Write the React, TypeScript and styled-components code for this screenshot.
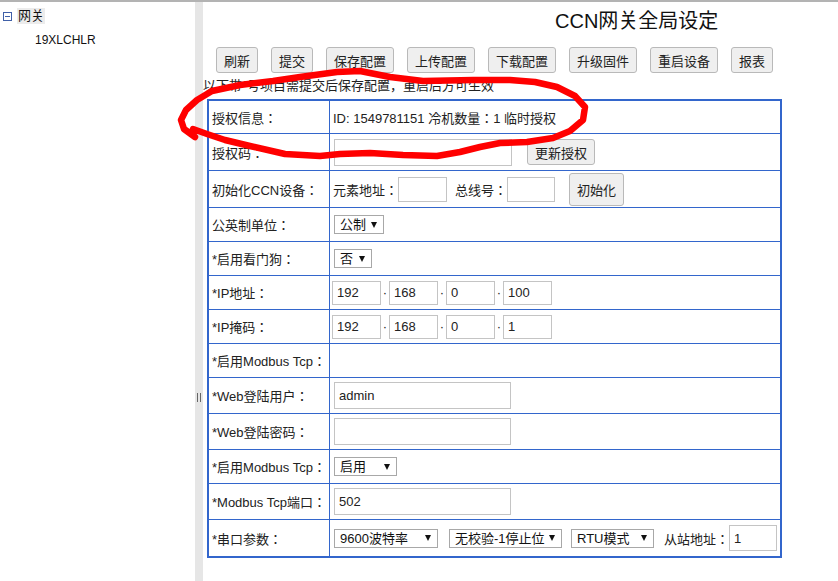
import React from "react";
import styled, { createGlobalStyle } from "styled-components";

const GlobalStyle = createGlobalStyle`
  html, body {
    margin: 0;
    padding: 0;
    background: #fff;
  }

  body {
    font-family: "Liberation Sans", "Noto Sans CJK JP", sans-serif;
    font-size: 13px;
    color: #222;
  }

  * {
    box-sizing: border-box;
  }
`;

const Screen = styled.div`
  position: relative;
  width: 838px;
  height: 581px;
  overflow: hidden;
`;

const Page = styled.div`
  display: flex;
  height: 100%;
  border-top: 2px solid #b3b3b3;
`;

const TreePane = styled.div`
  width: 195px;
  flex: none;
  padding: 6px 0 0 3px;
`;

const TreeRow = styled.div<{ $indent?: number }>`
  display: flex;
  align-items: center;
  gap: 5px;
  height: 16px;
  padding-left: ${(p) => p.$indent ?? 0}px;
  white-space: nowrap;

  & + & {
    margin-top: 8px;
  }
`;

const NodeLabel = styled.span<{ $selected?: boolean }>`
  padding: 0 1px;
  line-height: 16px;
  font-size: ${(p) => (p.$selected ? 13 : 12)}px;
  color: #111;
  background: ${(p) => (p.$selected ? "#ececec" : "transparent")};
`;

const Splitter = styled.div`
  width: 8px;
  flex: none;
  background: #e6e6e6;
  display: flex;
  justify-content: center;
  padding-top: 391px;
`;

const Grip = styled.div`
  width: 4px;
  height: 9px;
  border-left: 1px solid #666;
  border-right: 1px solid #666;
`;

const Main = styled.div`
  flex: 1;
  padding-top: 7px;
`;

const Title = styled.div`
  margin-left: 352px;
  font-size: 20px;
  line-height: 24px;
  color: #111;
  white-space: nowrap;
`;

const Toolbar = styled.div`
  display: flex;
  gap: 13px;
  margin: 14px 0 0 13px;
`;

const Button = styled.button<{ $h?: number; $ml?: number }>`
  height: ${(p) => p.$h ?? 26}px;
  margin-left: ${(p) => p.$ml ?? 0}px;
  padding: 0 7px;
  font: inherit;
  font-size: 13px;
  color: #222;
  background: #efefef;
  border: 1px solid #b9b9b9;
  border-radius: 3px;
  white-space: nowrap;
`;

const Note = styled.div`
  margin-top: 4px;
  line-height: 18px;
  white-space: nowrap;
`;

const SettingsTable = styled.table`
  margin: 4px 0 0 4px;
  width: 575px;
  border: 2px solid #3366cc;
  border-spacing: 0;
  border-collapse: separate;

  tr + tr > td {
    border-top: 1px solid #3366cc;
  }
`;

const Row = styled.tr<{ $h: number }>`
  height: ${(p) => p.$h}px;
`;

const LabelCell = styled.td`
  width: 121px;
  padding: 0 0 0 3px;
  border-right: 1px solid #3366cc;
  white-space: nowrap;
  color: #222;
`;

const ValueCell = styled.td`
  padding: 0 0 0 3px;
  white-space: nowrap;
`;

const Inline = styled.div`
  display: flex;
  align-items: center;
`;

const TextInput = styled.input<{ $w: number; $h?: number; $ml?: number }>`
  width: ${(p) => p.$w}px;
  height: ${(p) => p.$h ?? 27}px;
  margin-left: ${(p) => p.$ml ?? 1}px;
  padding: 0 4px;
  font: inherit;
  font-size: 13px;
  color: #222;
  background: #fff;
  border: 1px solid #c4c4c4;
  outline: none;
`;

const Gap = styled.span<{ $w: number }>`
  display: inline-block;
  width: ${(p) => p.$w}px;
`;

const IpGroup = styled.div`
  display: flex;
  align-items: center;
  margin-left: -1px;
`;

const IpDot = styled.span`
  width: 8px;
  text-align: center;
  font-size: 13px;
  line-height: 10px;
`;

const FakeSelect = styled.div<{ $w: number; $ml?: number }>`
  display: inline-flex;
  align-items: center;
  justify-content: space-between;
  width: ${(p) => p.$w}px;
  height: 19px;
  margin-left: ${(p) => p.$ml ?? 1}px;
  padding: 0 6px 0 5px;
  border: 1px solid #a8a8a8;
  background: #fff;
  font-size: 13px;
  line-height: 17px;
  color: #111;
`;

const Caret = styled.span`
  width: 0;
  height: 0;
  margin-left: 4px;
  border-left: 3px solid transparent;
  border-right: 3px solid transparent;
  border-top: 6px solid #111;
`;

const Annotation = styled.svg`
  position: absolute;
  left: 0;
  top: 0;
  pointer-events: none;
`;

function ToggleIcon() {
  return (
    <svg width="9" height="9" viewBox="0 0 9 9">
      <rect x="0.5" y="0.5" width="8" height="8" fill="#fff" stroke="#4060a8" />
      <line x1="2" y1="4.5" x2="7" y2="4.5" stroke="#4060a8" />
    </svg>
  );
}

function Select({ label, w, ml }: { label: string; w: number; ml?: number }) {
  return (
    <FakeSelect $w={w} $ml={ml}>
      <span>{label}</span>
      <Caret />
    </FakeSelect>
  );
}

function IpField({ parts }: { parts: string[] }) {
  return (
    <IpGroup>
      {parts.map((v, i) => (
        <React.Fragment key={i}>
          {i > 0 && <IpDot>·</IpDot>}
          <TextInput $w={49} $h={24} $ml={0} defaultValue={v} />
        </React.Fragment>
      ))}
    </IpGroup>
  );
}

const toolbarButtons = ["刷新", "提交", "保存配置", "上传配置", "下载配置", "升级固件", "重启设备", "报表"];

const scribble =
  "195,137 184,129 181,120 186,110 197,100 212,91 240,85 273,81 300,77 337,72 360,71 390,77 423,81 473,80 510,80 535,82 557,87 575,96 585,107 583,120 570,131 553,138 527,142 500,143 480,147 460,152 437,156 403,155 370,153 340,154 320,156 285,154 250,146 225,140 207,134 193,129";

export default function App() {
  return (
    <>
      <GlobalStyle />
      <Screen>
        <Page>
          <TreePane>
            <TreeRow>
              <ToggleIcon />
              <NodeLabel $selected>网关</NodeLabel>
            </TreeRow>
            <TreeRow $indent={31}>
              <NodeLabel>19XLCHLR</NodeLabel>
            </TreeRow>
          </TreePane>

          <Splitter>
            <Grip />
          </Splitter>

          <Main>
            <Title>CCN网关全局设定</Title>
            <Toolbar>
              {toolbarButtons.map((b) => (
                <Button key={b}>{b}</Button>
              ))}
            </Toolbar>
            <Note>以下带*号项目需提交后保存配置，重启后方可生效</Note>

            <SettingsTable>
              <tbody>
                <Row $h={32}>
                  <LabelCell>授权信息：</LabelCell>
                  <ValueCell>ID: 1549781151 冷机数量：1 临时授权</ValueCell>
                </Row>
                <Row $h={37}>
                  <LabelCell>授权码：</LabelCell>
                  <ValueCell>
                    <Inline>
                      <TextInput $w={178} />
                      <Button $ml={15}>更新授权</Button>
                    </Inline>
                  </ValueCell>
                </Row>
                <Row $h={37}>
                  <LabelCell>初始化CCN设备：</LabelCell>
                  <ValueCell>
                    <Inline>
                      元素地址：
                      <TextInput $w={49} $h={25} $ml={0} />
                      <Gap $w={8} />
                      总线号：
                      <TextInput $w={48} $h={25} $ml={0} />
                      <Button $ml={14} $h={33}>
                        初始化
                      </Button>
                    </Inline>
                  </ValueCell>
                </Row>
                <Row $h={34}>
                  <LabelCell>公英制单位：</LabelCell>
                  <ValueCell>
                    <Select label="公制" w={50} />
                  </ValueCell>
                </Row>
                <Row $h={34}>
                  <LabelCell>*启用看门狗：</LabelCell>
                  <ValueCell>
                    <Select label="否" w={38} />
                  </ValueCell>
                </Row>
                <Row $h={34}>
                  <LabelCell>*IP地址：</LabelCell>
                  <ValueCell>
                    <IpField parts={["192", "168", "0", "100"]} />
                  </ValueCell>
                </Row>
                <Row $h={34}>
                  <LabelCell>*IP掩码：</LabelCell>
                  <ValueCell>
                    <IpField parts={["192", "168", "0", "1"]} />
                  </ValueCell>
                </Row>
                <Row $h={34}>
                  <LabelCell>*启用Modbus Tcp：</LabelCell>
                  <ValueCell />
                </Row>
                <Row $h={36}>
                  <LabelCell>*Web登陆用户：</LabelCell>
                  <ValueCell>
                    <TextInput $w={177} defaultValue="admin" />
                  </ValueCell>
                </Row>
                <Row $h={36}>
                  <LabelCell>*Web登陆密码：</LabelCell>
                  <ValueCell>
                    <TextInput $w={177} />
                  </ValueCell>
                </Row>
                <Row $h={34}>
                  <LabelCell>*启用Modbus Tcp：</LabelCell>
                  <ValueCell>
                    <Select label="启用" w={63} />
                  </ValueCell>
                </Row>
                <Row $h={36}>
                  <LabelCell>*Modbus Tcp端口：</LabelCell>
                  <ValueCell>
                    <TextInput $w={177} defaultValue="502" />
                  </ValueCell>
                </Row>
                <Row $h={37}>
                  <LabelCell>*串口参数：</LabelCell>
                  <ValueCell>
                    <Inline>
                      <Select label="9600波特率" w={104} />
                      <Select label="无校验-1停止位" w={113} ml={11} />
                      <Select label="RTU模式" w={83} ml={9} />
                      <Gap $w={10} />
                      从站地址：
                      <TextInput $w={48} $h={26} $ml={0} defaultValue="1" />
                    </Inline>
                  </ValueCell>
                </Row>
              </tbody>
            </SettingsTable>
          </Main>
        </Page>

        <Annotation width="838" height="581" viewBox="0 0 838 581">
          <polyline
            points={scribble}
            fill="none"
            stroke="#ff0000"
            strokeWidth="6.5"
            strokeLinejoin="round"
            strokeLinecap="round"
          />
        </Annotation>
      </Screen>
    </>
  );
}
